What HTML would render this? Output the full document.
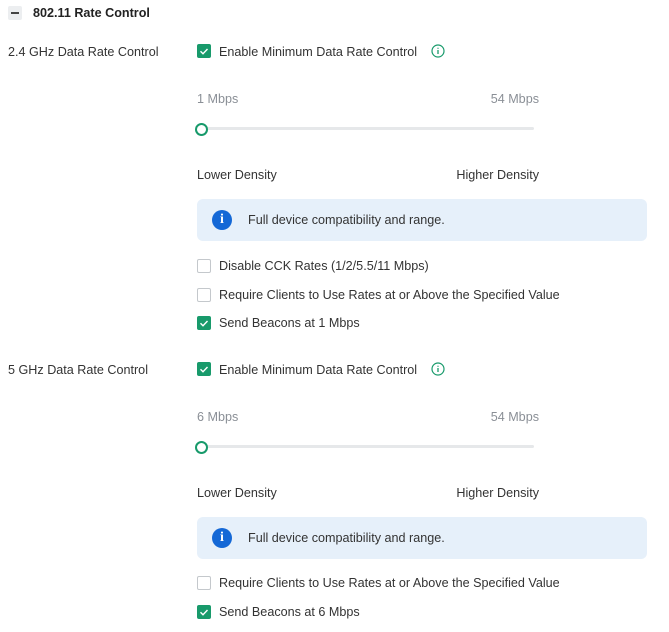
<!DOCTYPE html>
<html><head><style>
body{margin:0;width:669px;height:632px;background:#fff;font-family:"Liberation Sans",Arial,sans-serif;font-size:12.6px;color:#333;position:relative;overflow:hidden}
.a{position:absolute;white-space:nowrap;line-height:16px}
.r{position:absolute;white-space:nowrap;line-height:16px;right:130px}
.g{color:#8a8f96}
.cb{position:absolute;width:14px;height:14px;box-sizing:border-box;border-radius:2px}
.on{background:#189a6b}
.off{border:1px solid #c4c8cc;background:#fff}
.track{position:absolute;height:3px;background:#e6e8ea;border-radius:2px}
.thumb{position:absolute;width:9px;height:9px;border:2px solid #189a6b;border-radius:50%;background:#fff}
.box{position:absolute;left:197px;width:450px;height:42px;background:#e6f0fa;border-radius:6px}
.ic{position:absolute;left:15px;top:11px;width:20px;height:20px;border-radius:50%;background:#1468d6;color:#fff;font-weight:bold;font-size:14px;text-align:center;line-height:20px;font-family:"Liberation Serif",serif}
</style></head><body>
<div style="position:absolute;left:8px;top:6px;width:14px;height:14px;background:#eceef0;border-radius:2px"><div style="position:absolute;left:3px;top:6px;width:8px;height:2px;background:#444"></div></div>
<div class="a" style="left:33px;top:5px;font-weight:bold;color:#222">802.11 Rate Control</div>

<div class="a" style="left:8px;top:44px">2.4 GHz Data Rate Control</div>
<div class="cb on" style="left:197px;top:44px"><svg width="14" height="14"><path d="M3.5 7.2l2.5 2.5 4.5-4.7" stroke="#fff" stroke-width="1.4" fill="none"/></svg></div>
<div class="a" style="left:219px;top:44px">Enable Minimum Data Rate Control</div>
<svg style="position:absolute;left:431px;top:44px" width="14" height="14"><circle cx="7" cy="7" r="6" stroke="#189a6b" stroke-width="1.2" fill="none"/><path d="M7 6v4M7 3.8v1" stroke="#189a6b" stroke-width="1.3"/></svg>
<div class="a g" style="left:197px;top:91px">1 Mbps</div>
<div class="r g" style="top:91px">54 Mbps</div>
<div class="track" style="left:201px;top:127px;width:333px"></div>
<div class="thumb" style="left:195px;top:123px"></div>
<div class="a" style="left:197px;top:167px">Lower Density</div>
<div class="r" style="top:167px">Higher Density</div>
<div class="box" style="top:199px"><div class="ic">i</div><div class="a" style="left:51px;top:13px">Full device compatibility and range.</div></div>
<div class="cb off" style="left:197px;top:259px"></div>
<div class="a" style="left:219px;top:258px">Disable CCK Rates (1/2/5.5/11 Mbps)</div>
<div class="cb off" style="left:197px;top:288px"></div>
<div class="a" style="left:219px;top:287px">Require Clients to Use Rates at or Above the Specified Value</div>
<div class="cb on" style="left:197px;top:316px"><svg width="14" height="14"><path d="M3.5 7.2l2.5 2.5 4.5-4.7" stroke="#fff" stroke-width="1.4" fill="none"/></svg></div>
<div class="a" style="left:219px;top:315px">Send Beacons at 1 Mbps</div>

<div class="a" style="left:8px;top:362px">5 GHz Data Rate Control</div>
<div class="cb on" style="left:197px;top:362px"><svg width="14" height="14"><path d="M3.5 7.2l2.5 2.5 4.5-4.7" stroke="#fff" stroke-width="1.4" fill="none"/></svg></div>
<div class="a" style="left:219px;top:362px">Enable Minimum Data Rate Control</div>
<svg style="position:absolute;left:431px;top:362px" width="14" height="14"><circle cx="7" cy="7" r="6" stroke="#189a6b" stroke-width="1.2" fill="none"/><path d="M7 6v4M7 3.8v1" stroke="#189a6b" stroke-width="1.3"/></svg>
<div class="a g" style="left:197px;top:409px">6 Mbps</div>
<div class="r g" style="top:409px">54 Mbps</div>
<div class="track" style="left:201px;top:445px;width:333px"></div>
<div class="thumb" style="left:195px;top:441px"></div>
<div class="a" style="left:197px;top:485px">Lower Density</div>
<div class="r" style="top:485px">Higher Density</div>
<div class="box" style="top:517px"><div class="ic">i</div><div class="a" style="left:51px;top:13px">Full device compatibility and range.</div></div>
<div class="cb off" style="left:197px;top:576px"></div>
<div class="a" style="left:219px;top:575px">Require Clients to Use Rates at or Above the Specified Value</div>
<div class="cb on" style="left:197px;top:605px"><svg width="14" height="14"><path d="M3.5 7.2l2.5 2.5 4.5-4.7" stroke="#fff" stroke-width="1.4" fill="none"/></svg></div>
<div class="a" style="left:219px;top:604px">Send Beacons at 6 Mbps</div>
</body></html>
